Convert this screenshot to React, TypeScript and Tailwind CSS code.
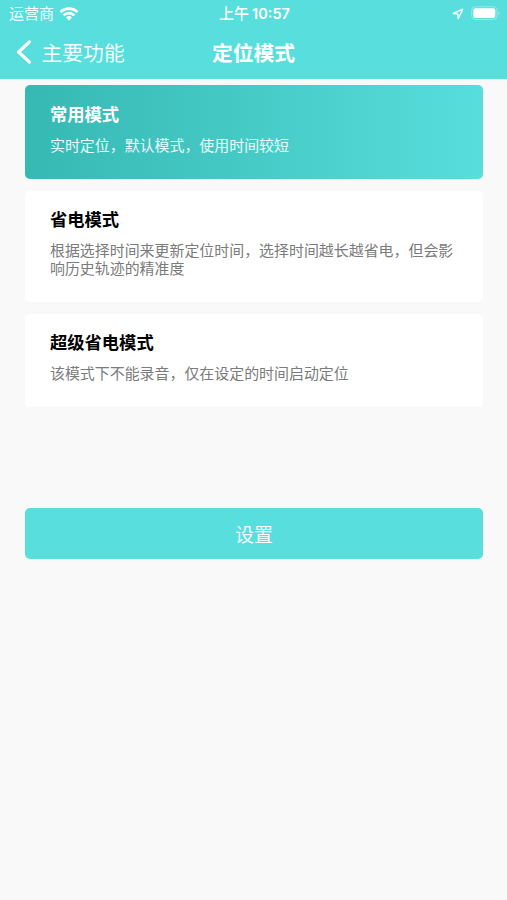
import React from "react";

type Mode = { title: string; text: string; active?: boolean };

const modes: Mode[] = [
  { title: "常用模式", text: "实时定位，默认模式，使用时间较短", active: true },
  {
    title: "省电模式",
    text: "根据选择时间来更新定位时间，选择时间越长越省电，但会影响历史轨迹的精准度",
  },
  { title: "超级省电模式", text: "该模式下不能录音，仅在设定的时间启动定位" },
];

function StatusBar() {
  return (
    <div className="grid h-[27px] grid-cols-[1fr_auto_1fr] items-center pl-[9px] pr-[7px] text-[15px] leading-[25px]">
      <div className="flex items-center gap-[5px]">
        <span className="pb-[2px] text-white/90">运营商</span>
        <svg width="20" height="14" viewBox="0 0 20 14" fill="none" stroke="white" strokeWidth="2.7">
          <path d="M1.4 5.1a12.2 12.2 0 0 1 17.2 0" />
          <path d="M4.6 8.4a7.7 7.7 0 0 1 10.8 0" />
          <path d="M10 13.5 7 10.5a4.3 4.3 0 0 1 6 0z" fill="white" stroke="none" />
        </svg>
      </div>
      <div className="flex items-center gap-[3px] font-medium">
        <span className="pb-[2px]">上午</span>
        <span className="font-['Inter','Noto_Sans_CJK_SC',sans-serif] text-[14.5px] font-semibold">10:57</span>
      </div>
      <div className="flex items-center justify-end">
        <svg className="mr-[7px]" width="12" height="12" viewBox="0 0 12 12" fill="none" stroke="white" strokeOpacity=".95" strokeWidth="1.4" strokeLinejoin="round">
          <path d="M10.7 1.2 1.2 5.5l4.6.6.4 4.7z" />
        </svg>
        <svg width="29" height="15" viewBox="0 0 29 15" fill="none">
          <rect x=".7" y=".7" width="25.2" height="12.8" rx="3.6" stroke="white" strokeOpacity=".35" />
          <rect x="2.3" y="2.3" width="22" height="9.6" rx="2" fill="white" />
          <path d="M27.2 5.2c1.7.6 1.7 3.2 0 3.8z" fill="white" fillOpacity=".4" />
        </svg>
      </div>
    </div>
  );
}

function ModeCard({ title, text, active }: Mode) {
  return (
    <section
      className={
        active
          ? "rounded-[5px] bg-linear-to-r from-[#36b8b3] to-[#57dedc] px-[24.7px] pt-[18px] pb-[25px] text-white"
          : "rounded-[5px] bg-white px-[24.7px] pt-[17.5px] pb-[25.5px] text-black"
      }
    >
      <h2 className="text-[17.3px] leading-[22px] font-bold">{title}</h2>
      <p
        className={
          active
            ? "mt-[11px] text-[14.95px] leading-[17.5px] text-white/90"
            : "mt-[11px] text-[14.95px] leading-[17.5px] text-[#7b7b7b]"
        }
      >
        {text}
      </p>
    </section>
  );
}

export default function App() {
  return (
    <div lang="zh-CN" className="min-h-[900px] w-[507px] bg-[#f9f9f9] font-['Noto_Sans_CJK_SC',sans-serif]">
      <header className="h-[79px] bg-[#58dedd] text-white">
        <StatusBar />
        <nav className="grid h-[50px] grid-cols-[1fr_auto_1fr] items-center text-[20.8px] leading-[30px]">
          <button className="flex items-center gap-[9.5px] pl-[16px]">
            <svg width="16" height="24" viewBox="0 0 16 24" fill="none" stroke="white" strokeWidth="3.2" strokeLinecap="round" strokeLinejoin="round">
              <path d="M13.4 1.9 2.6 12l10.8 10.1" />
            </svg>
            <span className="text-white/95">主要功能</span>
          </button>
          <h1 className="font-bold">定位模式</h1>
        </nav>
      </header>
      <main className="pt-[6px] pr-[24.5px] pl-[25.3px]">
        <div className="flex flex-col gap-[12px]">
          {modes.map((mode) => (
            <ModeCard key={mode.title} {...mode} />
          ))}
        </div>
        <button className="mt-[101.3px] flex h-[51px] w-full items-center justify-center rounded-[5px] bg-[#58dedd] pt-px text-[19px] text-white/95">
          设置
        </button>
      </main>
    </div>
  );
}
